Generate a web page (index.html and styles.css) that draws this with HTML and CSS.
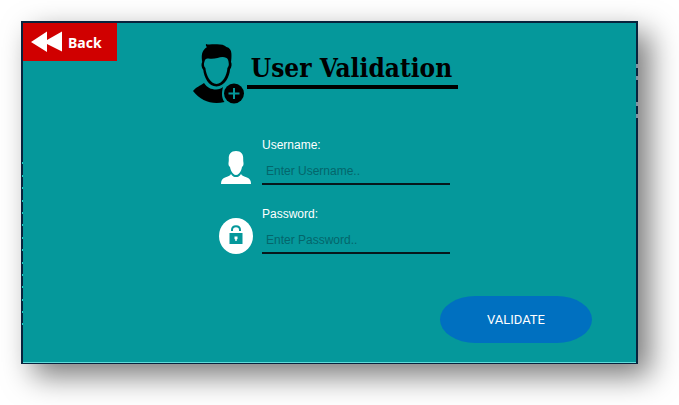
FILE: index.html
```html
<!DOCTYPE html>
<html lang="en">
<head>
<meta charset="utf-8">
<title>User Validation</title>
<link rel="stylesheet" href="styles.css">
</head>
<body>
<main class="window">
  <div class="ticks" aria-hidden="true"><i></i><i></i><i></i><i></i><i></i><i></i><i></i><i></i><i></i><i></i><i></i><i></i><i></i><i></i></div>
  <div class="marks" aria-hidden="true"><i></i><i></i><i></i><i></i></div>
  <header class="top">
    <button type="button" class="back">
      <svg width="32" height="22" viewBox="0 0 32 22" aria-hidden="true"><path fill="#fff" d="M0 11 16 .5V9L31 .5v20L16 13v8z"/></svg>
      <span>Back</span>
    </button>
    <div class="brand">
      <svg width="52" height="62" viewBox="0 0 52 62" aria-hidden="true">
        <path d="M13 1c2 .8 5 .4 9 .3 5-.2 9 .2 11.500 2.700 3 .8 4.700 3 4.900 6.500.2 3 0 6-.4 8.500 1 1.500.8 5-1 7.500-.3 7-5.500 17-13.500 17S11 34 10.300 27c-2-2.500-2.300-6-1.100-8C8.500 13 8 8 14 4c-1-.7-1.300-1.600-1-3z"/>
        <path fill="#05989b" d="M11.500 18.500c.4-2.500 2-3.500 4-3 3 .7 6 .3 9-.5 3-1 6-1.300 8.500-.3 2 .9 2.500 2.500 2.700 5.300.4 1.500 0 3.500-1.300 5-.3 7-5 16-10.900 16S13 32 12.400 25c-1.600-1.500-1.900-4.500-.9-6.500z"/>
        <path d="M0 48c3-4 7-5 11-8 3 4.500 7 6.500 12 6.500 3 0 5.500-1 7-2.500-1.500 6-1.500 11 1.500 15C19 62 8 58 0 48z"/>
        <circle cx="41" cy="50.500" r="10"/>
        <path stroke="#05989b" stroke-width="2" d="M41 45v11M35.500 50.500h11"/>
      </svg>
      <h1>User Validation</h1>
    </div>
  </header>
  <form class="form">
    <div class="row">
      <svg width="30" height="34" viewBox="0 0 30 34" aria-hidden="true"><path fill="#fff" d="M15 0c5 0 7.500 3 7.200 8 0 1.500 0 2.500.3 4 .2 2-.4 3-1.500 4-.5 3-1.500 5-3 6.500-1 1-2 1.500-3 1.500s-2-.5-3-1.500c-1.500-1.500-2.500-3.500-3-6.500-1.100-1-1.700-2-1.500-4 .3-1.500.3-2.500.3-4C7.500 3 10 0 15 0zM10 23c1.500 2.500 3 3 5 3s3.500-.5 5-3c1 2 3 2.300 6 3.500 3 1.200 4 3 4 6.500H0c0-3.500 1-5.300 4-6.500 3-1.200 5-1.500 6-3.500z"/></svg>
      <div class="field">
        <label for="username">Username:</label>
        <input id="username" type="text" placeholder="Enter Username..">
      </div>
    </div>
    <div class="row">
      <svg width="34" height="36" viewBox="0 0 34 36" aria-hidden="true">
        <ellipse cx="17" cy="18" rx="17" ry="18" fill="#fff"/>
        <path fill="none" stroke="#05989b" stroke-width="2" d="M13 13v-1c0-5 8-5 8 0v1"/>
        <rect x="10.500" y="15" width="13" height="11" fill="#05989b"/>
        <path fill="#fff" d="M15.500 18.500h3V21l-.8.500V23h-1.400v-1.500l-.8-.5z"/>
      </svg>
      <div class="field">
        <label for="password">Password:</label>
        <input id="password" type="password" placeholder="Enter Password..">
      </div>
    </div>
    <button type="submit" class="validate">VALIDATE</button>
  </form>
</main>
</body>
</html>
```
FILE: styles.css
```css
* { box-sizing: border-box; }

body {
  margin: 0;
  padding: 21px 41px 41px 21px;
  min-height: 100vh;
  display: flex;
  background: #fff;
  font-family: "Liberation Sans", Arial, sans-serif;
}

.window {
  position: relative;
  flex: 1;
  background: #05989b;
  border: 2px solid #08233d;
  border-bottom-width: 1px;
  box-shadow: inset 0 -1px #5fdcda, 12px 12px 28px rgba(0, 0, 0, .52);
}

.ticks,
.marks {
  position: absolute;
  display: flex;
  flex-direction: column;
  justify-content: space-between;
}

.ticks { left: -1px; top: 41%; bottom: 11%; }
.ticks i { width: 1px; height: 2px; background: #20cfc5; }

.marks { right: -2px; top: 12%; height: 54px; }
.marks i { width: 2px; height: 4px; background: #7d93a5; }
.marks i:nth-child(2) { margin-bottom: 14px; }

.top {
  display: grid;
  grid-template-columns: 1fr auto 1fr;
  align-items: start;
}

.back {
  justify-self: start;
  display: flex;
  align-items: center;
  gap: 5px;
  height: 38px;
  padding: 0 15px 0 8px;
  border: 0;
  background: #d00000;
  color: #fff;
  font: bold 14px "Noto Sans", "Open Sans", sans-serif;
}

.brand {
  display: flex;
  gap: 2px;
  padding: 20px 8px 0 0;
}

h1 {
  margin: 8px 0 0;
  padding: 0 6px 0 4px;
  align-self: flex-start;
  height: 38px;
  border-bottom: 4px solid #000;
  font: bold 26px/34px "DejaVu Serif Condensed", "DejaVu Serif", serif;
  white-space: nowrap;
}

.form {
  display: grid;
  gap: 20px;
  padding: 31px 44px 20px;
}

.row {
  justify-self: center;
  display: grid;
  grid-template-columns: 34px 188px;
  gap: 9px;
  margin-left: 10px;
}

.row svg {
  justify-self: center;
  align-self: end;
}

.field {
  display: flex;
  flex-direction: column;
  color: #fff;
  font-size: 12px;
}

label { line-height: 18px; }

input {
  width: 100%;
  height: 31px;
  padding: 8px 4px 4px;
  border: 0;
  border-bottom: 2px solid #07181c;
  background: transparent;
  color: #fff;
  font: 12px "Liberation Sans", Arial, sans-serif;
}

input::placeholder { color: #04666b; opacity: 1; }

.validate {
  justify-self: end;
  width: 152px;
  height: 47px;
  margin-top: 22px;
  border: 0;
  border-radius: 36px / 24px;
  background: #0070c0;
  color: #fff;
  font: 13px Roboto, sans-serif;
}
```
